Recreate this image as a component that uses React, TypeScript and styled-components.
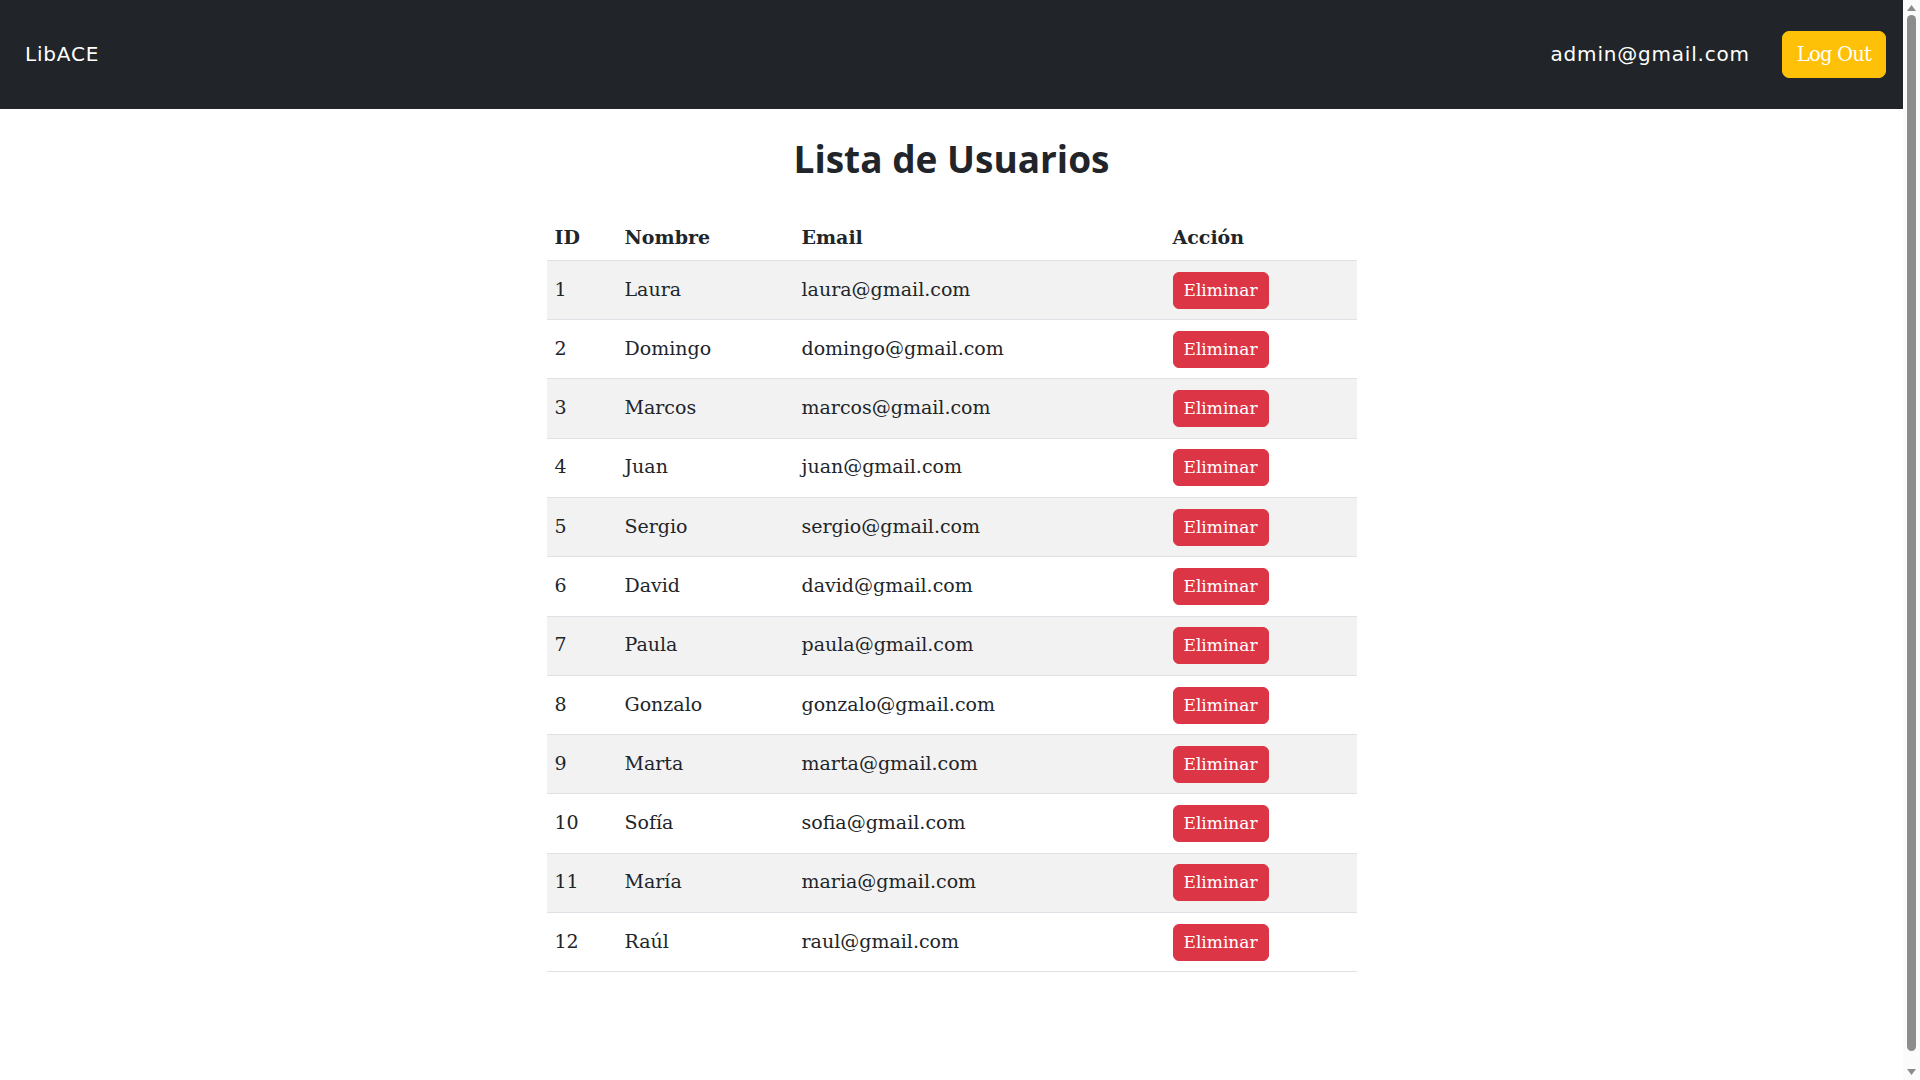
import React from "react";
import styled, { createGlobalStyle } from "styled-components";

const GlobalStyle = createGlobalStyle`
  html, body {
    margin: 0;
    padding: 0;
    background: #ffffff;
    color: #212529;
  }
  body {
    padding-right: 17px;
  }
  * { box-sizing: border-box; }
`;

/* Page scrollbar of the reference (the window chrome), laid over the right edge */
const ScrollRail = styled.div`
  position: fixed;
  top: 0;
  right: 0;
  bottom: 0;
  width: 17px;
  background: #fbfbfb;
  display: flex;
  flex-direction: column;
  align-items: center;
  padding: 4px 0;
  gap: 3px;
`;

const ScrollArrow = styled.svg`
  width: 11px;
  height: 8px;
  flex: none;
`;

const ScrollThumb = styled.div`
  flex: 1;
  width: 9px;
  border-radius: 5px;
  background: #8c8c8c;
  margin-bottom: 14px;
`;

const Navbar = styled.nav`
  height: 109px;
  background: #212529;
  display: flex;
  align-items: center;
  justify-content: space-between;
  padding: 0 17px 0 25px;
`;

const Brand = styled.div`
  font-family: "DejaVu Sans", "Open Sans", sans-serif;
  font-size: 20px;
  letter-spacing: 0.8px;
  color: #ffffff;
  margin-top: -2px;
`;

const NavRight = styled.div`
  display: flex;
  align-items: center;
  gap: 32px;
`;

const UserEmail = styled.span`
  font-family: "DejaVu Sans", "Open Sans", sans-serif;
  font-size: 20px;
  letter-spacing: 0.8px;
  color: #ffffff;
  margin-top: -2px;
`;

const LogOutButton = styled.button`
  font-family: "DejaVu Serif", "Liberation Serif", serif;
  font-size: 19.5px;
  line-height: 29px;
  padding: 8px 14px;
  border: 1px solid #ffc107;
  border-radius: 7px;
  background: #ffc107;
  color: #ffffff;
  letter-spacing: -0.8px;
  cursor: pointer;
`;

const Main = styled.main`
  display: flex;
  flex-direction: column;
  align-items: center;
  padding-bottom: 129px;
`;

const Title = styled.h1`
  font-family: "Open Sans", "DejaVu Sans", sans-serif;
  font-weight: 700;
  font-size: 37px;
  line-height: 1.2;
  margin: 28px 0 34px;
  color: #212529;
`;

const Table = styled.table`
  width: 810px;
  border-collapse: collapse;
  table-layout: fixed;
  font-family: "DejaVu Serif", "Liberation Serif", serif;
  font-size: 19px;
  line-height: 1.5;
  color: #212529;
`;

const Col = styled.col<{ $w: number }>`
  width: ${(p) => p.$w}px;
`;

const HeadCell = styled.th`
  text-align: left;
  font-weight: 700;
  padding: 8px 8px;
  border-bottom: 1px solid #dee2e6;
  vertical-align: baseline;
`;

const Row = styled.tr<{ $striped: boolean }>`
  background: ${(p) => (p.$striped ? "#f2f2f2" : "#ffffff")};
  border-bottom: 1px solid #dee2e6;
`;

const Cell = styled.td`
  padding: 10.65px 8px;
  vertical-align: baseline;
`;

const DeleteButton = styled.button`
  font-family: "DejaVu Serif", "Liberation Serif", serif;
  font-size: 17px;
  line-height: 23px;
  padding: 6px 10px;
  border: 1px solid #dc3545;
  border-radius: 6px;
  background: #dc3545;
  color: #ffffff;
  cursor: pointer;
`;

const users = [
  { id: 1, name: "Laura", email: "laura@gmail.com" },
  { id: 2, name: "Domingo", email: "domingo@gmail.com" },
  { id: 3, name: "Marcos", email: "marcos@gmail.com" },
  { id: 4, name: "Juan", email: "juan@gmail.com" },
  { id: 5, name: "Sergio", email: "sergio@gmail.com" },
  { id: 6, name: "David", email: "david@gmail.com" },
  { id: 7, name: "Paula", email: "paula@gmail.com" },
  { id: 8, name: "Gonzalo", email: "gonzalo@gmail.com" },
  { id: 9, name: "Marta", email: "marta@gmail.com" },
  { id: 10, name: "Sofía", email: "sofia@gmail.com" },
  { id: 11, name: "María", email: "maria@gmail.com" },
  { id: 12, name: "Raúl", email: "raul@gmail.com" },
];

export default function App() {
  return (
    <>
      <GlobalStyle />
      <Navbar>
        <Brand>LibACE</Brand>
        <NavRight>
          <UserEmail>admin@gmail.com</UserEmail>
          <LogOutButton>Log Out</LogOutButton>
        </NavRight>
      </Navbar>
      <Main>
        <Title>Lista de Usuarios</Title>
        <Table>
          <colgroup>
            <Col $w={70} />
            <Col $w={177} />
            <Col $w={371} />
            <Col $w={192} />
          </colgroup>
          <thead>
            <tr>
              <HeadCell>ID</HeadCell>
              <HeadCell>Nombre</HeadCell>
              <HeadCell>Email</HeadCell>
              <HeadCell>Acción</HeadCell>
            </tr>
          </thead>
          <tbody>
            {users.map((u, i) => (
              <Row key={u.id} $striped={i % 2 === 0}>
                <Cell>{u.id}</Cell>
                <Cell>{u.name}</Cell>
                <Cell>{u.email}</Cell>
                <Cell>
                  <DeleteButton>Eliminar</DeleteButton>
                </Cell>
              </Row>
            ))}
          </tbody>
        </Table>
      </Main>
      <ScrollRail aria-hidden="true">
        <ScrollArrow viewBox="0 0 11 8">
          <path d="M5.5 1 L10 7 L1 7 Z" fill="#8c8c8c" />
        </ScrollArrow>
        <ScrollThumb />
        <ScrollArrow viewBox="0 0 11 8">
          <path d="M1 1 L10 1 L5.5 7 Z" fill="#8c8c8c" />
        </ScrollArrow>
      </ScrollRail>
    </>
  );
}
